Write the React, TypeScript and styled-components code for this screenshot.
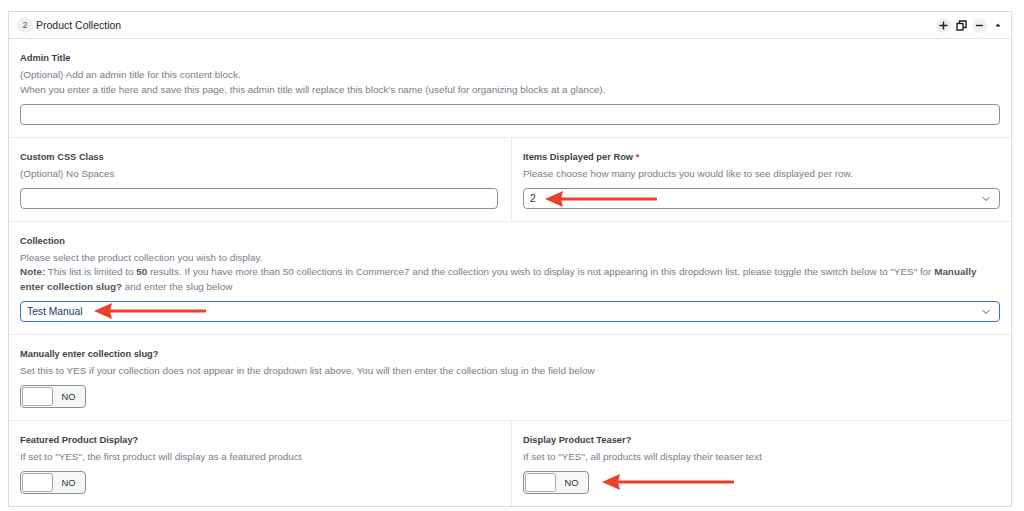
import React from "react";
import styled, { createGlobalStyle } from "styled-components";
import { ChevronDown } from "lucide-react";

const Global = createGlobalStyle`
  html, body { margin: 0; padding: 0; background: #fff; }
  body { font-family: "Liberation Sans", Arial, sans-serif; color: #2c3338; }
  * { box-sizing: border-box; }
`;

const Page = styled.div`
  padding: 11px 0 0 8px;
`;

const Panel = styled.div`
  width: 1004px;
  border: 1px solid #dcdcde;
  background: #fff;
`;

const Header = styled.div`
  height: 27px;
  border-bottom: 1px solid #e2e4e7;
  display: flex;
  align-items: center;
  padding: 0 6px 0 8px;
`;

const Badge = styled.span`
  width: 16px;
  height: 16px;
  border-radius: 50%;
  background: #f0f0f1;
  display: inline-flex;
  align-items: center;
  justify-content: center;
  font-size: 9px;
  color: #50575e;
  margin-right: 3px;
`;

const HeaderTitle = styled.span`
  font-size: 10.5px;
  color: #1e1e1e;
  flex: 1;
`;

const HeaderTools = styled.div`
  display: flex;
  align-items: center;
  gap: 3px;
`;

const ToolBtn = styled.span<{ $round?: boolean }>`
  width: 15px;
  height: 15px;
  border-radius: 50%;
  background: ${(p) => (p.$round ? "#f0f0f1" : "transparent")};
  display: inline-flex;
  align-items: center;
  justify-content: center;
  color: #1e1e1e;
`;

const Section = styled.div`
  padding: 13px 11px 11.5px 11px;
  border-bottom: 1px solid #ebebeb;
  &:last-child { border-bottom: none; }
`;

const Row = styled.div`
  display: grid;
  grid-template-columns: 502px 1fr;
  border-bottom: 1px solid #ebebeb;
  &:last-child { border-bottom: none; }
`;

const Cell = styled.div<{ $divider?: boolean; $pr?: number }>`
  padding: 13px ${(p) => p.$pr ?? 11}px 11.5px 11px;
  border-left: ${(p) => (p.$divider ? "1px solid #ebebeb" : "none")};
`;

const Label = styled.div`
  font-size: 9.3px;
  line-height: 13px;
  font-weight: 700;
  color: #3c434a;
`;

const Required = styled.span`
  color: #d63638;
`;

const Desc = styled.div`
  margin-top: 3px;
  font-size: 9.9px;
  line-height: 14.5px;
  color: #757d8a;
  b { color: #50575e; font-weight: 700; }
`;

const Control = styled.div`
  position: relative;
  margin-top: 7px;
`;

const TextInput = styled.div`
  height: 21px;
  border: 1px solid #8c8f94;
  border-radius: 4px;
  background: #fff;
`;

const Select = styled.div<{ $focus?: boolean }>`
  height: 21px;
  border: ${(p) => (p.$focus ? "1.5px solid #3f72af" : "1px solid #8c8f94")};
  border-radius: 4px;
  background: #fff;
  display: flex;
  align-items: center;
  justify-content: space-between;
  padding: 0 7px 0 6px;
  font-size: 10.3px;
  color: ${(p) => (p.$focus ? "#1d3a5f" : "#2c3338")};
  svg { color: #50575e; }
`;

const Toggle = styled.div`
  width: 66px;
  height: 23px;
  border: 1px solid #8c8f94;
  border-radius: 4px;
  background: #f6f7f7;
  display: flex;
  align-items: center;
  padding: 1px;
`;

const Knob = styled.span`
  width: 31px;
  height: 19px;
  background: #fff;
  border: 1px solid #a7aaad;
  border-radius: 3px;
`;

const ToggleText = styled.span`
  flex: 1;
  text-align: center;
  font-size: 9.3px;
  color: #2c3338;
`;

const ArrowWrap = styled.div<{ $left: number; $top: number }>`
  position: absolute;
  left: ${(p) => p.$left}px;
  top: ${(p) => p.$top}px;
  height: 18px;
  pointer-events: none;
`;

const Arrow = ({ left, top, len = 112 }: { left: number; top: number; len?: number }) => (
  <ArrowWrap $left={left} $top={top} style={{ width: len }}>
    <svg width={len} height="18" viewBox={`0 0 ${len} 18`}>
      <line x1="14" y1="9" x2={len - 1} y2="9" stroke="#e8412c" strokeWidth="3" strokeLinecap="round" />
      <polygon points="0,9 18,1 16,9 18,17" fill="#e8412c" />
    </svg>
  </ArrowWrap>
);

const Dup = () => (
  <svg width="11" height="11" viewBox="0 0 11 11" fill="none" stroke="#1e1e1e" strokeWidth="1.4">
    <rect x="1" y="3.5" width="6" height="6.5" />
    <path d="M3.5 3.5V1h6.5v6.5H7" />
  </svg>
);

export default function App() {
  return (
    <>
      <Global />
      <Page>
        <Panel>
          <Header>
            <Badge>2</Badge>
            <HeaderTitle>Product Collection</HeaderTitle>
            <HeaderTools>
              <ToolBtn $round>
                <svg width="9" height="9" viewBox="0 0 9 9">
                  <path d="M4.5 0.5v8M0.5 4.5h8" stroke="#1e1e1e" strokeWidth="1.4" />
                </svg>
              </ToolBtn>
              <ToolBtn>
                <Dup />
              </ToolBtn>
              <ToolBtn $round>
                <svg width="9" height="9" viewBox="0 0 9 9">
                  <path d="M1 4.5h7" stroke="#1e1e1e" strokeWidth="1.4" />
                </svg>
              </ToolBtn>
              <ToolBtn>
                <svg width="6" height="4" viewBox="0 0 6 4">
                  <polygon points="3,0.5 5.5,3.5 0.5,3.5" fill="#1e1e1e" />
                </svg>
              </ToolBtn>
            </HeaderTools>
          </Header>

          <Section>
            <Label>Admin Title</Label>
            <Desc>
              (Optional) Add an admin title for this content block.
              <br />
              When you enter a title here and save this page, this admin title will replace this block's name (useful for organizing blocks at a glance).
            </Desc>
            <Control>
              <TextInput />
            </Control>
          </Section>

          <Row>
            <Cell $pr={13}>
              <Label>Custom CSS Class</Label>
              <Desc>(Optional) No Spaces</Desc>
              <Control>
                <TextInput />
              </Control>
            </Cell>
            <Cell $divider>
              <Label>
                Items Displayed per Row <Required>*</Required>
              </Label>
              <Desc>Please choose how many products you would like to see displayed per row.</Desc>
              <Control>
                <Select>
                  <span>2</span>
                  <ChevronDown size={12} strokeWidth={2} />
                </Select>
                <Arrow left={22} top={2} len={112} />
              </Control>
            </Cell>
          </Row>

          <Section>
            <Label>Collection</Label>
            <Desc>
              Please select the product collection you wish to display.
              <br />
              <b>Note:</b> This list is limited to <b>50</b> results. If you have more than 50 collections in Commerce7 and the collection you wish to display is not appearing in this dropdown list, please toggle the switch below to "YES" for <b>Manually enter collection slug?</b> and enter the slug below
            </Desc>
            <Control>
              <Select $focus>
                <span>Test Manual</span>
                <ChevronDown size={12} strokeWidth={2} />
              </Select>
              <Arrow left={74} top={1} len={112} />
            </Control>
          </Section>

          <Section>
            <Label>Manually enter collection slug?</Label>
            <Desc>Set this to YES if your collection does not appear in the dropdown list above. You will then enter the collection slug in the field below</Desc>
            <Control>
              <Toggle>
                <Knob />
                <ToggleText>NO</ToggleText>
              </Toggle>
            </Control>
          </Section>

          <Row>
            <Cell $pr={13}>
              <Label>Featured Product Display?</Label>
              <Desc>If set to "YES", the first product will display as a featured product</Desc>
              <Control>
                <Toggle>
                  <Knob />
                  <ToggleText>NO</ToggleText>
                </Toggle>
              </Control>
            </Cell>
            <Cell $divider>
              <Label>Display Product Teaser?</Label>
              <Desc>If set to "YES", all products will display their teaser text</Desc>
              <Control>
                <Toggle>
                  <Knob />
                  <ToggleText>NO</ToggleText>
                </Toggle>
                <Arrow left={79} top={2} len={132} />
              </Control>
            </Cell>
          </Row>
        </Panel>
      </Page>
    </>
  );
}
